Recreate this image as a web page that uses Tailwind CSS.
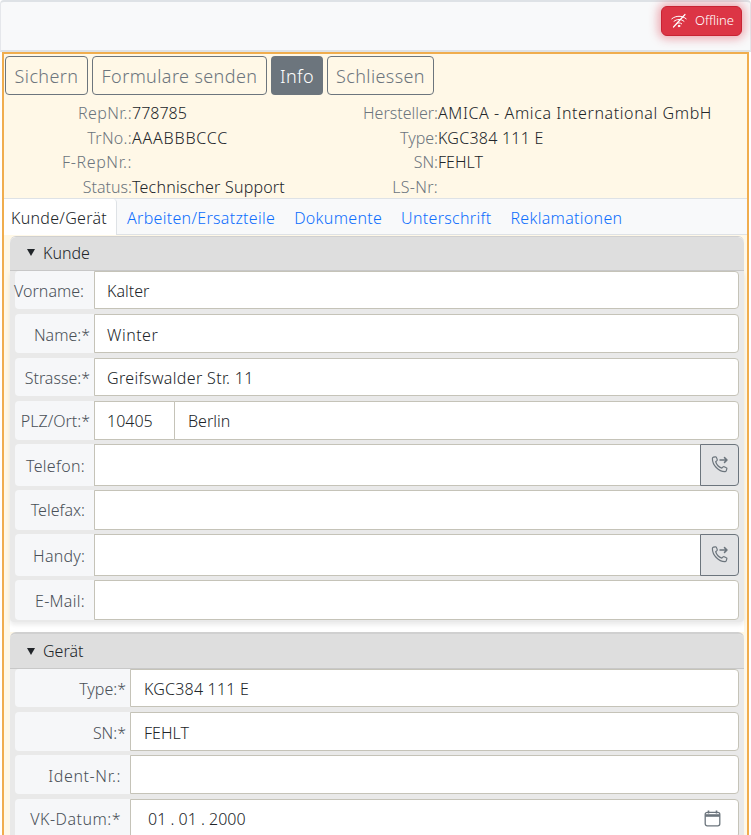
<!DOCTYPE html>
<html lang="de">
<head>
<meta charset="UTF-8">
<title>Reparatur</title>
<script src="https://cdn.jsdelivr.net/npm/@tailwindcss/browser@4"></script>
</head>
<body class="h-[835px] overflow-hidden bg-white font-['Noto_Sans',sans-serif] text-[16px] font-light text-[#212529]">
  <!-- Navbar -->
  <nav class="flex h-[52px] items-start justify-end rounded-t border-x border-t-2 border-b-2 border-x-[#e5e7eb] border-t-[#dee2e6] border-b-[#dee2e6] bg-[#f8f9fa] pt-[4px] pr-[8px]">
    <button class="flex h-[30px] w-[81px] items-center gap-[8px] rounded-md border border-[#c82333] bg-[#dc3545] pl-[9px] text-[13px] text-white shadow-[0_0_10px_3px_rgba(220,53,69,0.4)]">
      <svg class="h-[16px] w-[16px]" viewBox="0 0 16 16" fill="none" stroke="currentColor" stroke-width="1" stroke-linecap="round">
        <path d="M.8 5.800C3 4 5.400 3.300 8 3.300c2.600 0 5 .7 7.200 2.500"/>
        <path d="M3 8.300C4.500 7.100 6.200 6.500 8 6.500s3.500.6 5 1.800"/>
        <path d="M5.300 10.800c.8-.6 1.700-.9 2.700-.9s1.900.3 2.700.9"/>
        <path d="M14 1.500 2.500 14" stroke-width="1.200"/>
        <circle cx="8" cy="13" r=".8" fill="currentColor"/>
      </svg>
      Offline
    </button>
  </nav>

  <main class="mx-[2px] h-[783px] overflow-hidden border-x-2 border-t-2 border-[#f0ad4e] bg-[#fff8e7]">
    <!-- Actions -->
    <div class="flex gap-[4px] pt-[2px] pl-[1px] text-[18px] leading-none tracking-[0.4px] text-[#6c757d]">
      <button class="h-[39px] w-[83px] rounded border border-[#6c757d]">Sichern</button>
      <button class="h-[39px] w-[175px] rounded border border-[#6c757d]">Formulare senden</button>
      <button class="h-[39px] w-[52px] rounded bg-[#6c757d] text-white">Info</button>
      <button class="h-[39px] w-[107px] rounded border border-[#6c757d]">Schliessen</button>
    </div>

    <!-- Auftragsdaten -->
    <dl class="mt-[6px] grid h-[97px] grid-cols-[128px_179px_127px_1fr] auto-rows-[24.500px] items-center leading-none">
      <dt class="text-right tracking-[0.4px] text-[#6c757d]">RepNr.:</dt><dd>778785</dd>
      <dt class="text-right text-[#6c757d]">Hersteller:</dt><dd class="whitespace-nowrap tracking-[0.6px]">AMICA - Amica International GmbH</dd>
      <dt class="text-right tracking-[0.3px] text-[#6c757d]">TrNo.:</dt><dd class="tracking-[0.8px]">AAABBBCCC</dd>
      <dt class="text-right text-[#6c757d]">Type:</dt><dd class="tracking-[0.25px]">KGC384 111 E</dd>
      <dt class="text-right tracking-[0.6px] text-[#6c757d]">F-RepNr.:</dt><dd></dd>
      <dt class="text-right text-[#6c757d]">SN:</dt><dd>FEHLT</dd>
      <dt class="text-right text-[#6c757d]">Status:</dt><dd class="whitespace-nowrap tracking-[0.2px]">Technischer Support</dd>
      <dt class="text-right tracking-[0.3px] text-[#6c757d]">LS-Nr:</dt><dd></dd>
    </dl>

    <!-- Tabs -->
    <div class="relative -mx-[2px] flex h-[37px] border-y border-[#dee2e6] bg-[#f8f9fa] pt-[2px] tracking-[0.3px] text-[#0d6efd]">
      <a class="-mt-[2px] flex h-[36px] w-[115px] items-center justify-center rounded-t border-r border-[#dee2e6] bg-white pt-[2px] text-[#212529]">Kunde/Gerät</a>
      <a class="ml-[10px] flex items-center">Arbeiten/Ersatzteile</a>
      <a class="ml-[19px] flex items-center">Dokumente</a>
      <a class="ml-[19px] flex items-center">Unterschrift</a>
      <a class="ml-[19px] flex items-center">Reklamationen</a>
    </div>

    <!-- Kunde -->
    <section class="mt-[1px] mr-[3px] ml-[6px] rounded-t-md border-t border-[#d0d0d0] bg-white pb-[10px]">
      <h2 class="flex h-[34px] items-center gap-[8px] rounded-t-md border-b border-[#c8c8c8] bg-[#dedede] pb-[2px] pl-[17px] font-light">
        <span class="h-0 w-0 border-x-[4px] border-t-[7px] border-x-transparent border-t-[#212529]"></span>Kunde
      </h2>
      <div class="flex flex-col gap-[5px] rounded-b bg-[#e9e9e9] px-[5px] pb-[2px] shadow-[0_3px_4px_rgba(0,0,0,0.08)]">
        <div class="flex h-[38px]">
          <label class="flex w-[79px] items-center justify-end whitespace-nowrap rounded-l bg-[#f6f7f9] pt-[2px] pr-[10px] text-[#495057]">Vorname:</label>
          <div class="flex flex-1 items-center rounded-r border border-[#c5c3b8] bg-white pt-[2px] pl-[12px]">Kalter</div>
        </div>
        <div class="flex h-[39px]">
          <label class="flex w-[79px] items-center justify-end rounded-l bg-[#f6f7f9] pt-[2px] pr-[4px] text-[#495057]">Name:*</label>
          <div class="flex flex-1 items-center rounded-r border border-[#c5c3b8] bg-white pt-[2px] pl-[12px] tracking-[0.5px]">Winter</div>
        </div>
        <div class="flex h-[38px]">
          <label class="flex w-[79px] items-center justify-end rounded-l bg-[#f6f7f9] pt-[2px] pr-[4px] text-[#495057]">Strasse:*</label>
          <div class="flex flex-1 items-center rounded-r border border-[#c5c3b8] bg-white pt-[2px] pl-[12px] tracking-[0.35px]">Greifswalder Str. 11</div>
        </div>
        <div class="flex h-[39px]">
          <label class="flex w-[79px] items-center justify-end whitespace-nowrap rounded-l bg-[#f6f7f9] pr-[4px] text-[#495057]">PLZ/Ort:*</label>
          <div class="flex w-[81px] items-center border border-[#c5c3b8] bg-white pl-[12px]">10405</div>
          <div class="-ml-px flex flex-1 items-center rounded-r border border-[#c5c3b8] bg-white pl-[13px]">Berlin</div>
        </div>
        <div class="-my-[1px] flex h-[42px]">
          <label class="flex w-[79px] items-center justify-end rounded-l bg-[#f6f7f9] pt-[2px] pr-[9px] tracking-[0.3px] text-[#495057]">Telefon:</label>
          <div class="flex-1 border border-[#c5c3b8] bg-white"></div>
          <button class="-ml-px flex w-[39px] items-center justify-center rounded-r border border-[#6c757d] bg-[#e2e3e5] text-[#6c757d]">
            <svg class="h-[20px] w-[20px]" viewBox="0 0 20 20" fill="none" stroke="currentColor" stroke-width="1.200" stroke-linecap="round" stroke-linejoin="round">
              <path d="M3.500 2.200 5.300 1.800c.5-.1.9.1 1.100.6l.8 2c.2.500 0 .9-.3 1.200L5.700 6.700c.8 2.600 3.500 5.500 6.100 6.400l1.200-1.200c.4-.3.8-.4 1.200-.2l2.100 1c.5.200.7.700.5 1.200l-.5 1.700c-.2.700-.8 1.100-1.500 1.100C8.500 16.500 2.400 10 2.400 3.700c0-.7.400-1.300 1.100-1.500z"/>
              <path d="M10 5h7M14.500 2.600 17 5l-2.500 2.400" stroke-width="1.500"/>
            </svg>
          </button>
        </div>
        <div class="flex h-[40px]">
          <label class="flex w-[79px] items-center justify-end rounded-l bg-[#f6f7f9] pr-[9px] text-[#495057]">Telefax:</label>
          <div class="flex-1 rounded-r border border-[#c5c3b8] bg-white"></div>
        </div>
        <div class="-my-[1px] flex h-[42px]">
          <label class="flex w-[79px] items-center justify-end rounded-l bg-[#f6f7f9] pt-[2px] pr-[9px] tracking-[0.2px] text-[#495057]">Handy:</label>
          <div class="flex-1 border border-[#c5c3b8] bg-white"></div>
          <button class="-ml-px flex w-[39px] items-center justify-center rounded-r border border-[#6c757d] bg-[#e2e3e5] text-[#6c757d]">
            <svg class="h-[20px] w-[20px]" viewBox="0 0 20 20" fill="none" stroke="currentColor" stroke-width="1.200" stroke-linecap="round" stroke-linejoin="round">
              <path d="M3.500 2.200 5.300 1.800c.5-.1.9.1 1.100.6l.8 2c.2.500 0 .9-.3 1.200L5.700 6.700c.8 2.600 3.500 5.500 6.100 6.400l1.200-1.200c.4-.3.8-.4 1.200-.2l2.100 1c.5.200.7.700.5 1.200l-.5 1.700c-.2.700-.8 1.100-1.500 1.100C8.500 16.500 2.400 10 2.400 3.700c0-.7.400-1.300 1.100-1.500z"/>
              <path d="M10 5h7M14.500 2.600 17 5l-2.500 2.400" stroke-width="1.500"/>
            </svg>
          </button>
        </div>
        <div class="flex h-[40px]">
          <label class="flex w-[79px] items-center justify-end rounded-l bg-[#f6f7f9] pt-[2px] pr-[9px] tracking-[0.3px] text-[#495057]">E-Mail:</label>
          <div class="flex-1 rounded-r border border-[#c5c3b8] bg-white"></div>
        </div>
      </div>
    </section>

    <!-- Gerät -->
    <section class="mr-[3px] ml-[6px] rounded-t-md border-t-2 border-[#d0d0d0] bg-[#e9e9e9]">
      <h2 class="flex h-[35px] items-center gap-[8px] rounded-t-md border-b border-[#c8c8c8] bg-[#dedede] pl-[17px] font-light">
        <span class="h-0 w-0 border-x-[4px] border-t-[7px] border-x-transparent border-t-[#212529]"></span>Gerät
      </h2>
      <div class="flex flex-col gap-[5px] px-[5px]">
        <div class="flex h-[38px]">
          <label class="flex w-[115px] items-center justify-end rounded-l bg-[#f6f7f9] pt-[2px] pr-[4px] text-[#495057]">Type:*</label>
          <div class="flex flex-1 items-center rounded-r border border-[#c5c3b8] bg-white pt-[2px] pl-[13px] tracking-[0.2px]">KGC384 111 E</div>
        </div>
        <div class="flex h-[39px]">
          <label class="flex w-[115px] items-center justify-end rounded-l bg-[#f6f7f9] pt-[2px] pr-[4px] text-[#495057]">SN:*</label>
          <div class="flex flex-1 items-center rounded-r border border-[#c5c3b8] bg-white pt-[2px] pl-[13px]">FEHLT</div>
        </div>
        <div class="-mt-[1px] flex h-[39px]">
          <label class="flex w-[115px] items-center justify-end rounded-l bg-[#f6f7f9] pt-[2px] pr-[9px] tracking-[0.6px] text-[#495057]">Ident-Nr.:</label>
          <div class="flex-1 rounded-r border border-[#c5c3b8] bg-white"></div>
        </div>
        <div class="flex h-[39px]">
          <label class="flex w-[115px] items-center justify-end whitespace-nowrap rounded-l bg-[#f6f7f9] pr-[9px] tracking-[0.5px] text-[#495057]">VK-Datum:*</label>
          <div class="flex flex-1 items-center justify-between rounded-r border border-[#c5c3b8] bg-white px-[17px]">
            <span class="whitespace-pre">01 . 01 . 2000</span>
            <svg class="h-[17px] w-[17px] text-[#6c757d]" viewBox="0 0 16 17" fill="none" stroke="currentColor" stroke-width="1.300">
              <rect x=".7" y="2.300" width="14.600" height="13.500" rx="2"/>
              <path d="M.7 5.500h14.600" stroke-width="2.600"/>
              <path d="M4 .5v3M12 .5v3" stroke-width="1.600"/>
            </svg>
          </div>
        </div>
      </div>
    </section>
  </main>
</body>
</html>
